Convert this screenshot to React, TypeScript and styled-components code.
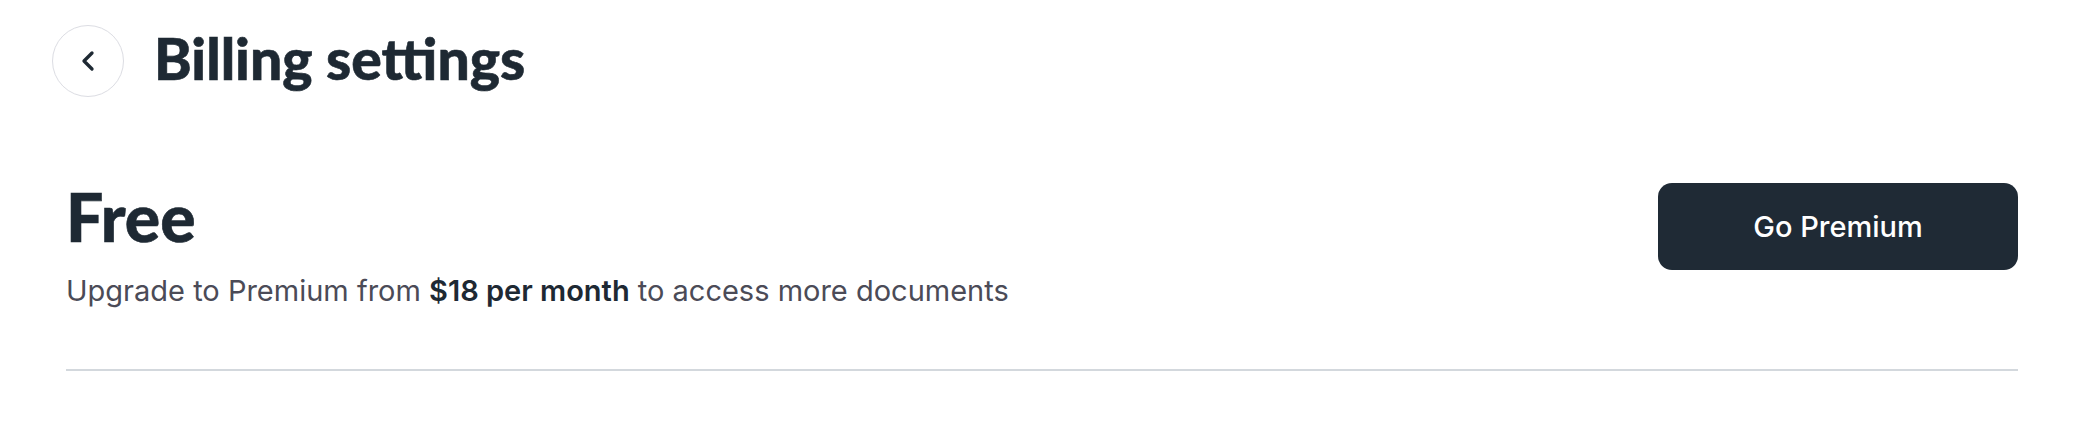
import styled, { createGlobalStyle } from "styled-components";
import { ChevronLeft } from "lucide-react";

const GlobalStyle = createGlobalStyle`
  body {
    margin: 0;
    background: #ffffff;
    font-family: Inter, "Liberation Sans", sans-serif;
    color: #1e2933;
  }
`;

const App = () => {
  return (
    <Page>
      <GlobalStyle />
      <Header>
        <BackButton aria-label="Back">
          <ChevronLeft size={32} strokeWidth={2.5} />
        </BackButton>
        <Title>Billing settings</Title>
      </Header>

      <Section>
        <PlanRow>
          <PlanInfo>
            <PlanName>Free</PlanName>
            <PlanText>
              Upgrade to Premium from <Strong>$18 per month</Strong> to access more documents
            </PlanText>
          </PlanInfo>
          <PrimaryButton>Go Premium</PrimaryButton>
        </PlanRow>
        <Divider />
      </Section>
    </Page>
  );
};

export default App;

const Page = styled.div`
  width: 2082px;
  height: 436px;
  box-sizing: border-box;
  padding-top: 25px;
`;

const Header = styled.div`
  display: flex;
  align-items: center;
  gap: 30px;
  padding-left: 52px;
  height: 72px;
`;

const BackButton = styled.button`
  width: 72px;
  height: 72px;
  flex-shrink: 0;
  border-radius: 50%;
  border: 1px solid #dcdde3;
  background: #ffffff;
  color: #1e2933;
  display: flex;
  align-items: center;
  justify-content: center;
  padding: 0;
  cursor: pointer;
`;

const Title = styled.h1`
  margin: 0 0 6px 0;
  font-family: Lato, "Liberation Sans", sans-serif;
  font-weight: 900;
  font-size: 57px;
  -webkit-text-stroke: 0.6px #1e2933;
  color: #1e2933;
`;

const Section = styled.div`
  padding: 0 64px 0 66px;
  margin-top: 80px;
`;

const PlanRow = styled.div`
  display: flex;
  justify-content: space-between;
  align-items: flex-start;
`;

const PlanInfo = styled.div`
  display: flex;
  flex-direction: column;
  gap: 17px;
`;

const PlanName = styled.h2`
  margin: 0;
  font-family: Lato, "Liberation Sans", sans-serif;
  font-weight: 900;
  font-size: 66px;
  line-height: 79px;
  -webkit-text-stroke: 0.6px #1e2933;
  color: #1e2933;
`;

const PlanText = styled.p`
  margin: 0;
  font-size: 29px;
  color: #4b4b57;
`;

const Strong = styled.span`
  font-weight: 600;
  color: #1e2933;
`;

const PrimaryButton = styled.button`
  width: 360px;
  height: 87px;
  border: none;
  border-radius: 14px;
  background: #1f2a35;
  color: #ffffff;
  font-family: Inter, "Liberation Sans", sans-serif;
  font-size: 29px;
  font-weight: 500;
  cursor: pointer;
  margin-top: 6px;
`;

const Divider = styled.div`
  height: 2px;
  background: #d3d8dd;
  margin-top: 61px;
`;
